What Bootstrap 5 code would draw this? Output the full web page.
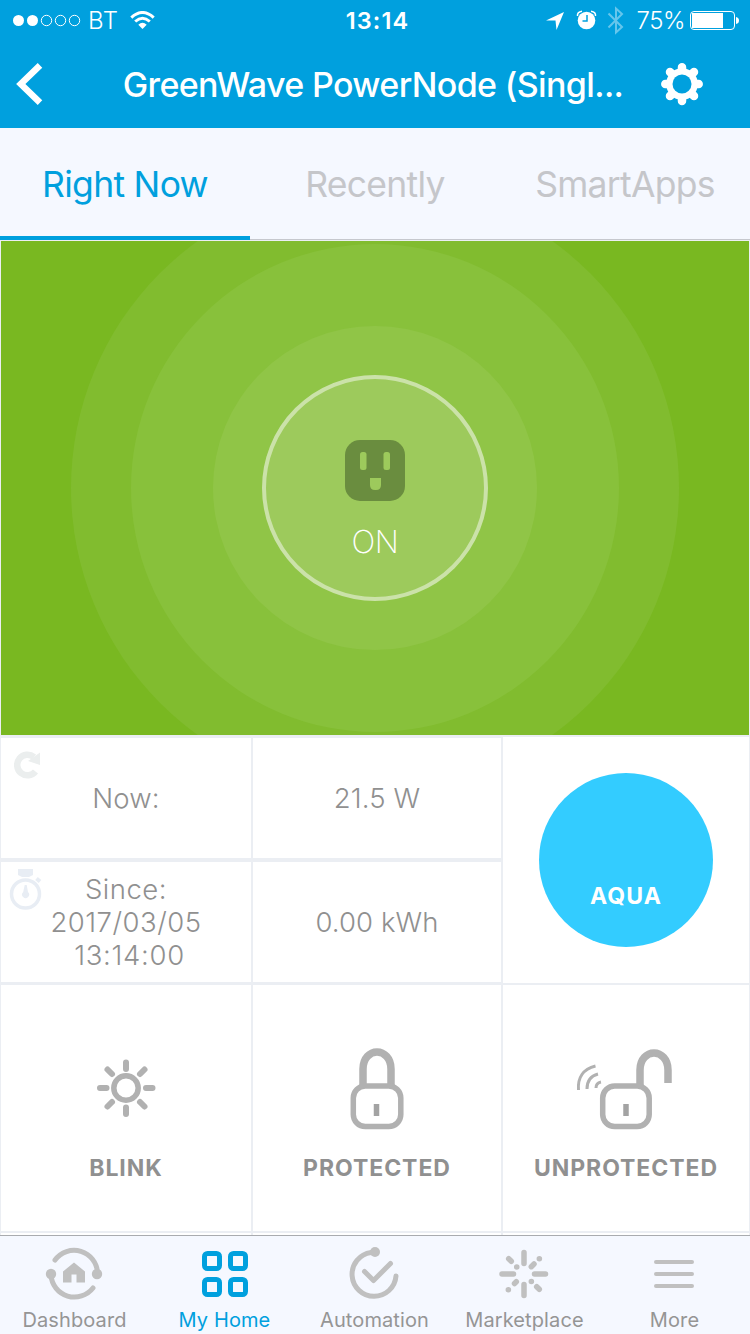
<!DOCTYPE html>
<html lang="en">
<head>
<meta charset="utf-8">
<meta name="viewport" content="width=device-width, initial-scale=1">
<title>GreenWave PowerNode</title>
<link href="https://cdn.jsdelivr.net/npm/bootstrap@5.3.0/dist/css/bootstrap.min.css" rel="stylesheet">
<style>
body{font-family:Inter,"Liberation Sans",sans-serif;width:750px;height:1334px;overflow:hidden;background:#fff;line-height:1.2}
svg{display:block;flex:none}
.top-blue{background:#00a0de;color:#fff;height:128px}
.status-row{height:40px;font-size:24px}
.status-row .side{flex:1 1 0}
.status-row span,.st-time{padding-top:2px}
.st-carrier{letter-spacing:.6px;font-weight:300}
.st-time{font-size:23.5px;font-weight:600;letter-spacing:1.1px;padding-left:5px}
.st-pct{letter-spacing:-.5px;font-weight:300}
.title-row{height:88px}
.title-text{font-size:34px;font-weight:500;letter-spacing:-.63px;width:540px;text-align:center;padding-top:2px}
.tabs-row{height:112px;background:#f5f8ff;border-bottom:1px solid #c6c8ce}
.tabs-row .nav-link{height:112px;padding:6px 0 0;display:flex;align-items:center;justify-content:center;font-size:35.5px;color:#c5c6ca;letter-spacing:-.7px;border-bottom:4px solid transparent}
.tabs-row .nav-link.active{color:#00a0de;border-color:#00a0de}
.tile-grid{display:grid;background:#ebeef3;grid-template-columns:250px 248px 246px;column-gap:2px;grid-template-rows:494px 3px 120px 4px 120px 3px 246px 2px 2px;padding:1px 1px 0;height:995px}
.hero{grid-column:1/4;grid-row:1;background:#79b821}
.on-label{font-size:31.5px;font-weight:250;fill:#fff;letter-spacing:-.5px}
.tile{background:#fff;color:#909090;text-align:center}
.r1{grid-row:3}.r2{grid-row:5}.r3{grid-row:7}.r4{grid-row:9}
.c1{grid-column:1}.c2{grid-column:2}.c3{grid-column:3}
.val{font-size:27.5px;line-height:33px;font-weight:300;letter-spacing:.1px;padding-top:1px}
.since{letter-spacing:.5px}
.clock{letter-spacing:.7px;padding-left:7px}
.tall{grid-row:3/6;margin-top:-1px;margin-bottom:-1px}
.aqua{width:174px;height:174px;background:#33ccff;color:#fff;font-size:23px;font-weight:700;letter-spacing:1.1px;padding-top:73px}
.cap{font-size:23px;font-weight:700;letter-spacing:.95px;line-height:28px;color:#909090;padding-top:1px}
.bottom-bar{height:99px;border-top:1px solid #a9abaf;background:#f5f8ff}
.bottom-bar .nav-link{padding:0;width:150px;color:#959595;font-size:20px;font-weight:400;line-height:24px}
.bottom-bar .nav-link div{letter-spacing:.1px;padding-right:1px}
.bottom-bar .nav-link.active{color:#00a0de}
</style>
</head>
<body>
<header class="top-blue">
  <div class="status-row d-flex align-items-center">
    <div class="side d-flex align-items-center">
      <svg width="88" height="40" fill="none" stroke="#fff"><circle cx="18.500" cy="20.500" r="5.500" fill="#fff" stroke="none"/><circle cx="32.500" cy="20.500" r="5.500" fill="#fff" stroke="none"/><circle cx="46.500" cy="20.500" r="5.200"/><circle cx="60.500" cy="20.500" r="5.200"/><circle cx="74.500" cy="20.500" r="5.200"/></svg>
      <span class="st-carrier">BT</span>
      <svg style="margin-left:11px" width="25" height="18" viewBox="0 0 25 18" fill="none" stroke="#fff" stroke-width="3"><path d="M1.300 6.600Q12.500-3.600 23.700 6.600M5.200 10.500Q12.500 4 19.800 10.500"/><path d="M8.300 13.800Q12.500 9.800 16.700 13.800L12.500 18Z" fill="#fff" stroke="none"/></svg>
    </div>
    <div class="st-time">13:14</div>
    <div class="side d-flex align-items-center justify-content-end">
      <svg width="80" height="40" viewBox="545 0 80 40"><path d="M546 20.500 564 12 556.500 30 555.500 20.500Z" fill="#fff"/><circle cx="586.500" cy="20.500" r="8.800" fill="#fff"/><path d="M577.500 16Q577 12 582 11.300M591 11.300Q596 12 595.500 16" fill="none" stroke="#fff" stroke-width="1.500"/><path d="M587 15V21H582.500" fill="none" stroke="#00a0de" stroke-width="1.500"/><path d="M608.500 13.500 622 27 616 32.500V8.500L622 14 608.500 27.500" fill="none" stroke="#66c6ec" stroke-width="2"/></svg>
      <span class="st-pct text-end" style="width:60px">75%</span>
      <svg style="margin-left:5px" width="60" height="20" viewBox="690 10 60 20"><rect x="690.500" y="11.500" width="44" height="18" rx="3.500" fill="none" stroke="#fff"/><path d="M692 13H723V28H692Z" fill="#fff"/><path d="M736 17Q739 17.500 739 20.500T736 24Z" fill="#fff"/></svg>
    </div>
  </div>
  <div class="title-row d-flex align-items-center">
    <svg width="103" height="88" viewBox="0 40 103 88" fill="none" stroke="#fff" stroke-width="6.500"><path d="M40 65.300 20.800 84 40 102.700"/></svg>
    <div class="title-text text-nowrap">GreenWave PowerNode (Singl...</div>
    <svg width="107" height="88" viewBox="643 40 107 88"><g stroke="#fff" stroke-width="8.500" stroke-linecap="round"><path d="M682 67.300V101M665.300 84H698.700M670 72 694 96M694 72 670 96"/></g><circle cx="682" cy="84" r="15.800" fill="#fff"/><circle cx="682" cy="84" r="9.500" fill="#00a0de"/></svg>
  </div>
</header>
<nav class="tabs-row nav nav-justified flex-nowrap">
  <a class="nav-link active">Right Now</a>
  <a class="nav-link">Recently</a>
  <a class="nav-link">SmartApps</a>
</nav>
<main class="tile-grid">
  <section class="hero">
    <svg width="748" height="494" viewBox="1 241 748 494">
      <circle cx="375" cy="488" r="304" fill="#81bc2f"/><circle cx="375" cy="488" r="244" fill="#88c13b"/><circle cx="375" cy="488" r="162" fill="#90c547"/>
      <circle cx="375" cy="488" r="111" fill="#9dca5c" stroke="#cbe2a9" stroke-width="4"/>
      <rect x="345" y="440" width="60" height="61" rx="15" fill="#6a8d3f"/>
      <g fill="#9dca5c"><rect x="360" y="452" width="6.500" height="18" rx="2.500"/><rect x="383.500" y="452" width="6.500" height="18" rx="2.500"/><path d="M370 478H381V485Q381 490 376 490H375Q370 490 370 485Z"/></g>
      <text class="on-label" x="375" y="553" text-anchor="middle">ON</text>
    </svg>
  </section>
  <div class="tile r1 c1 position-relative d-flex align-items-center justify-content-center val">
    <svg class="position-absolute" style="left:11px;top:12px" width="30" height="30" viewBox="12 750 30 30"><path d="M35.500 771.500A10.300 10.300 0 1 1 34 757" fill="none" stroke="#ebeeee" stroke-width="6.500"/><path d="M40 752.500V765L28 761Z" fill="#ebeeee"/></svg>
    <span>Now:</span>
  </div>
  <div class="tile r1 c2 d-flex align-items-center justify-content-center val"><span>21.5 W</span></div>
  <div class="tile tall c3 d-flex align-items-center justify-content-center">
    <div class="aqua rounded-circle d-flex align-items-center justify-content-center">AQUA</div>
  </div>
  <div class="tile r2 c1 position-relative d-flex align-items-center justify-content-center val">
    <svg class="position-absolute" style="left:8px;top:6px" width="34" height="43" viewBox="9 868 34 43"><path d="M18 869H33V875L29 877H22L18 875Z" fill="#e8edf4"/><circle cx="25.500" cy="894" r="14" fill="none" stroke="#e8edf4" stroke-width="3.500"/><path d="M36.500 878.500 40 881.500" stroke="#e8edf4" stroke-width="4"/><path d="M24.700 885H26.700L28 892A3.500 3.500 0 1 1 23.200 892Z" fill="#e8edf4"/></svg>
    <span class="since">Since:<br>2017/03/05<br><span class="clock">13:14:00</span></span>
  </div>
  <div class="tile r2 c2 d-flex align-items-center justify-content-center val"><span>0.00 kWh</span></div>
  <div class="tile r3 c1 d-flex flex-column align-items-center">
    <svg width="250" height="168" viewBox="1 985 250 168" fill="none" stroke="#b1b1b1"><circle cx="126" cy="1088" r="12.200" stroke-width="5.500"/><path stroke-width="6" stroke-linecap="round" d="M126 1062.500V1069M126 1107.500V1114M100 1088H106.500M146 1088H152.500M107.500 1069.500 112 1074M140 1102 144.500 1106.500M144.500 1069.500 140 1074M112 1102 107.500 1106.500"/></svg>
    <div class="cap">BLINK</div>
  </div>
  <div class="tile r3 c2 d-flex flex-column align-items-center">
    <svg width="248" height="168" viewBox="253 985 248 168" fill="none" stroke="#b1b1b1"><path stroke-width="7.500" d="M363 1085V1069C363 1058 370 1052 377 1052S391 1058 391 1069V1085"/><rect x="353.300" y="1086" width="47.500" height="40.500" rx="12" stroke-width="5.500"/><path stroke="#a3a3a3" stroke-width="5.500" d="M376.500 1104V1116"/></svg>
    <div class="cap">PROTECTED</div>
  </div>
  <div class="tile r3 c3 d-flex flex-column align-items-center">
    <svg width="246" height="168" viewBox="503 985 246 168" fill="none" stroke="#b1b1b1"><path stroke-width="7.500" d="M640 1085V1070C640 1059 647 1053 654 1053S668 1059 668 1070V1083"/><rect x="602.700" y="1086" width="46.500" height="40.500" rx="12" stroke-width="5.500"/><path stroke="#a3a3a3" stroke-width="5.500" d="M626 1104V1116"/><path stroke-width="3" d="M578.500 1090C577.500 1078 583 1069 595.500 1066M587 1089C587 1081 590 1076 598 1074M596 1088Q596 1083 601 1082"/></svg>
    <div class="cap">UNPROTECTED</div>
  </div>
  <div class="tile r4 c1"></div><div class="tile r4 c2"></div><div class="tile r4 c3"></div>
</main>
<nav class="bottom-bar nav flex-nowrap">
  <a class="nav-link"><svg width="150" height="72" viewBox="0 1236 150 72" fill="none" stroke="#c0c0c0" stroke-width="5" stroke-linecap="round"><path d="M55 1260A23.500 23.500 0 0 1 97.500 1273M51 1275A23.500 23.500 0 0 0 93 1288"/><g fill="#c0c0c0" stroke="none"><circle cx="97" cy="1274" r="5.200"/><circle cx="51" cy="1274" r="5.200"/><path d="M74 1262.500 85 1271.500V1282.500H76.500V1274.500H71.500V1282.500H63V1271.500Z"/></g></svg><div class="text-center">Dashboard</div></a>
  <a class="nav-link active"><svg width="150" height="72" viewBox="150 1236 150 72" fill="none" stroke="#00a0de" stroke-width="5"><rect x="204.500" y="1253.500" width="15" height="15" rx="3"/><rect x="230.500" y="1253.500" width="15" height="15" rx="3"/><rect x="204.500" y="1279.500" width="15" height="15" rx="3"/><rect x="230.500" y="1279.500" width="15" height="15" rx="3"/></svg><div class="text-center">My Home</div></a>
  <a class="nav-link"><svg width="150" height="72" viewBox="300 1236 150 72" fill="none" stroke="#c0c0c0" stroke-width="5" stroke-linecap="round" stroke-linejoin="round"><path d="M371 1252.500A22 22 0 1 0 396 1276M364.500 1271.500 373.500 1280.500 390.500 1263.500"/><circle cx="375" cy="1252" r="5" fill="#c0c0c0" stroke="none"/></svg><div class="text-center">Automation</div></a>
  <a class="nav-link"><svg width="150" height="72" viewBox="450 1236 150 72" fill="none" stroke="#c0c0c0" stroke-width="5.500" stroke-linecap="round"><path d="M524 1252.500V1263.500M524 1284.500V1295.500M502 1274H513.500M534.500 1274H545.500M508.700 1258.700 511.300 1261.300M516.700 1266.900H516.800M539.300 1258.700H539.400M531.300 1266.700 534 1264M531.300 1281.400H531.400M536.700 1286.700 539.300 1289.300M516.300 1281.700 514.500 1283.500M508.300 1289.700H508.400"/></svg><div class="text-center">Marketplace</div></a>
  <a class="nav-link"><svg width="150" height="72" viewBox="600 1236 150 72" stroke="#c0c0c0" stroke-width="4" stroke-linecap="round"><path d="M656 1262H692M656 1274H692M656 1286H692"/></svg><div class="text-center">More</div></a>
</nav>
<script src="https://cdn.jsdelivr.net/npm/bootstrap@5.3.0/dist/js/bootstrap.bundle.min.js"></script>
</body>
</html>
